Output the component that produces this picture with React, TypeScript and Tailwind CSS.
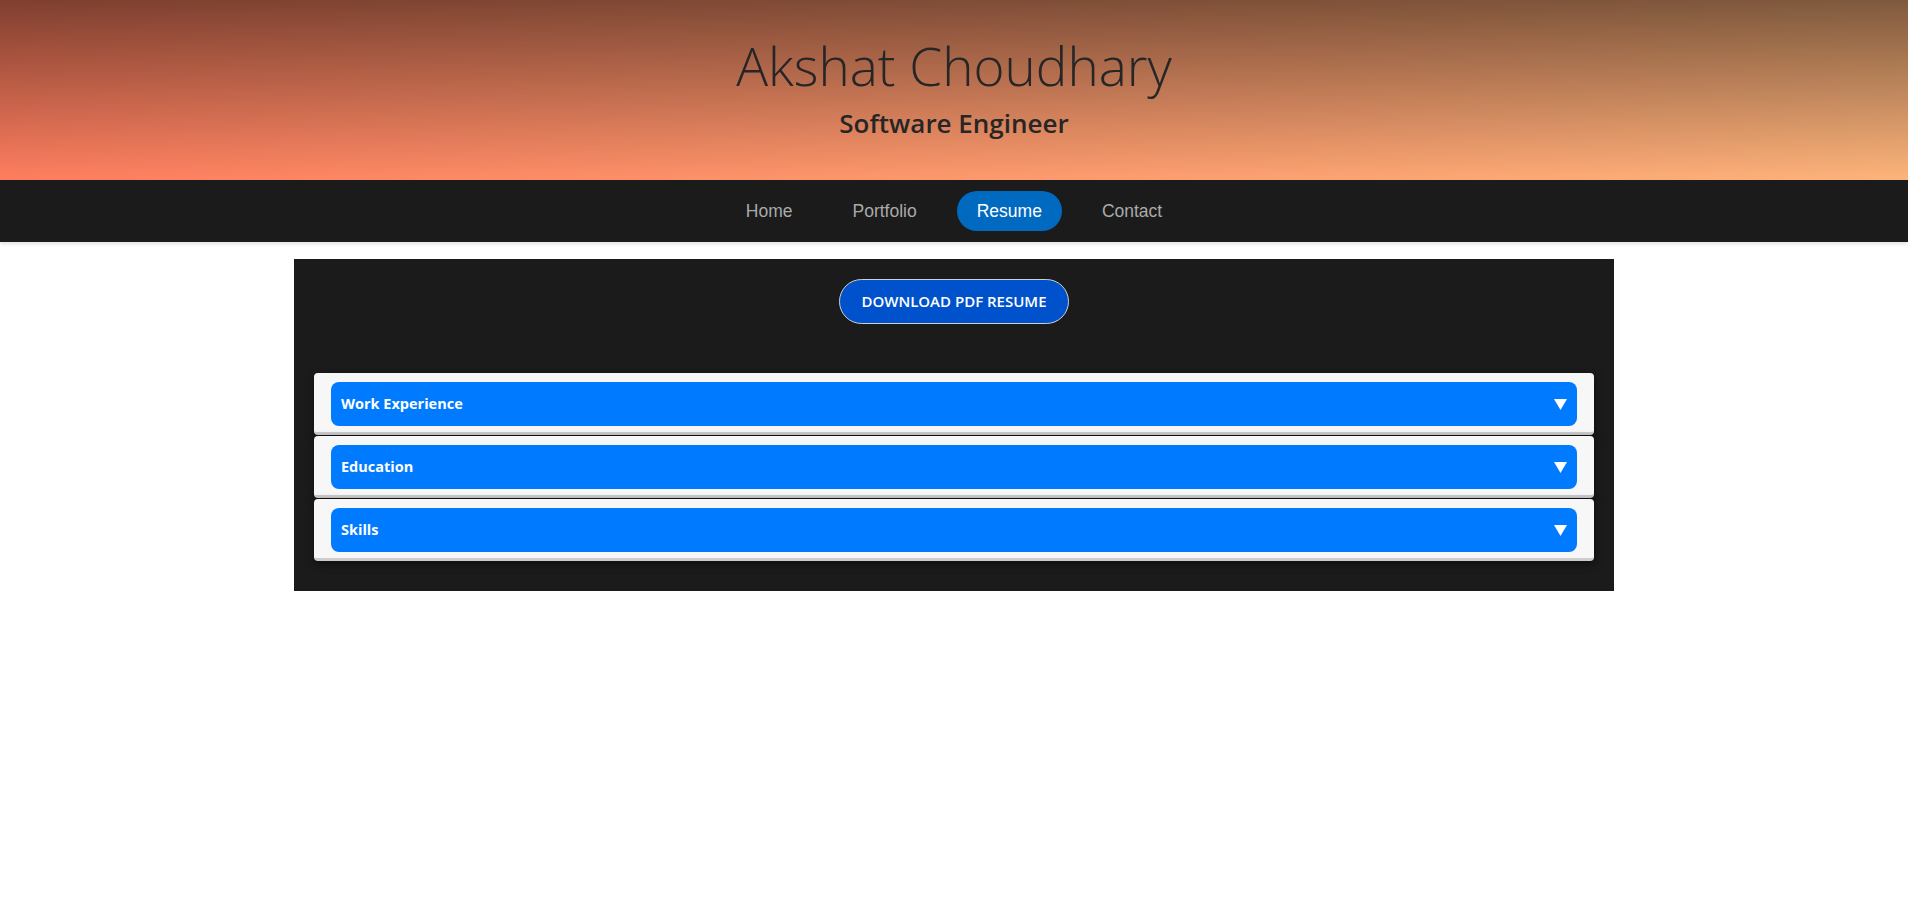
import React, { useState } from "react";

const sections = ["Work Experience", "Education", "Skills"];

const navItems = ["Home", "Portfolio", "Resume", "Contact"];

export default function App() {
  const [open, setOpen] = useState<string | null>(null);

  return (
    <div className="min-h-[917px] bg-white font-['Open_Sans',sans-serif]">
      <header className="h-[180px] flex flex-col items-center bg-[linear-gradient(to_bottom,rgba(0,0,0,0.5),rgba(0,0,0,0)),linear-gradient(to_right,#ff7e5f,#feb47b)]">
        <h1 className="mt-[32px] text-[53px] leading-[68px] font-light text-[#262626]">
          Akshat Choudhary
        </h1>
        <h2 className="mt-[6px] text-[26px] leading-[34px] font-semibold text-[#262626]">
          Software Engineer
        </h2>
      </header>

      <nav className="relative h-[62px] bg-[#1b1b1b] flex items-center justify-center gap-[20px] shadow-[0_2px_4px_rgba(0,0,0,0.12)]">
        {navItems.map((item) => (
          <a
            key={item}
            href="#"
            className={
              item === "Resume"
                ? "h-[40px] px-[20px] flex items-center rounded-full bg-[#0069c0] text-white text-[17.5px] font-['Liberation_Sans',Arial,sans-serif]"
                : "h-[40px] px-[20px] flex items-center text-[#aaaaaa] text-[17.5px] font-['Liberation_Sans',Arial,sans-serif]"
            }
          >
            {item}
          </a>
        ))}
      </nav>

      <main className="w-[1320px] mx-auto mt-[17px] bg-[#1b1b1b] px-[20px] pt-[20px] pb-[30px]">
        <div className="flex justify-center">
          <button className="h-[45px] px-[21px] rounded-full border border-[#cfcfcf] bg-[#0052cc] text-white text-[15px] font-semibold uppercase">
            Download PDF Resume
          </button>
        </div>

        <div className="mt-[49px] flex flex-col gap-[1px]">
          {sections.map((s) => (
            <div
              key={s}
              className="bg-[#f7f7f7] rounded-[4px] px-[17px] pt-[9px] pb-[6px] border-b-[3px] border-[#cccccc] shadow-[1px_3px_8px_rgba(0,0,0,0.5)]"
            >
              <button
                onClick={() => setOpen(open === s ? null : s)}
                className="w-full h-[44px] rounded-[8px] bg-[#007bff] text-white flex items-center justify-between pl-[10px] pr-[9px] text-[14.5px] font-bold"
              >
                <span>{s}</span>
                {/* little down triangle */}
                <svg width="13" height="11" viewBox="0 0 13 11" className="mr-[1px]">
                  <path d="M0 0 H13 L6.5 11 Z" fill="#ffffff" />
                </svg>
              </button>
              {open === s && <div className="py-3 text-sm text-gray-700">…</div>}
            </div>
          ))}
        </div>
      </main>
    </div>
  );
}
